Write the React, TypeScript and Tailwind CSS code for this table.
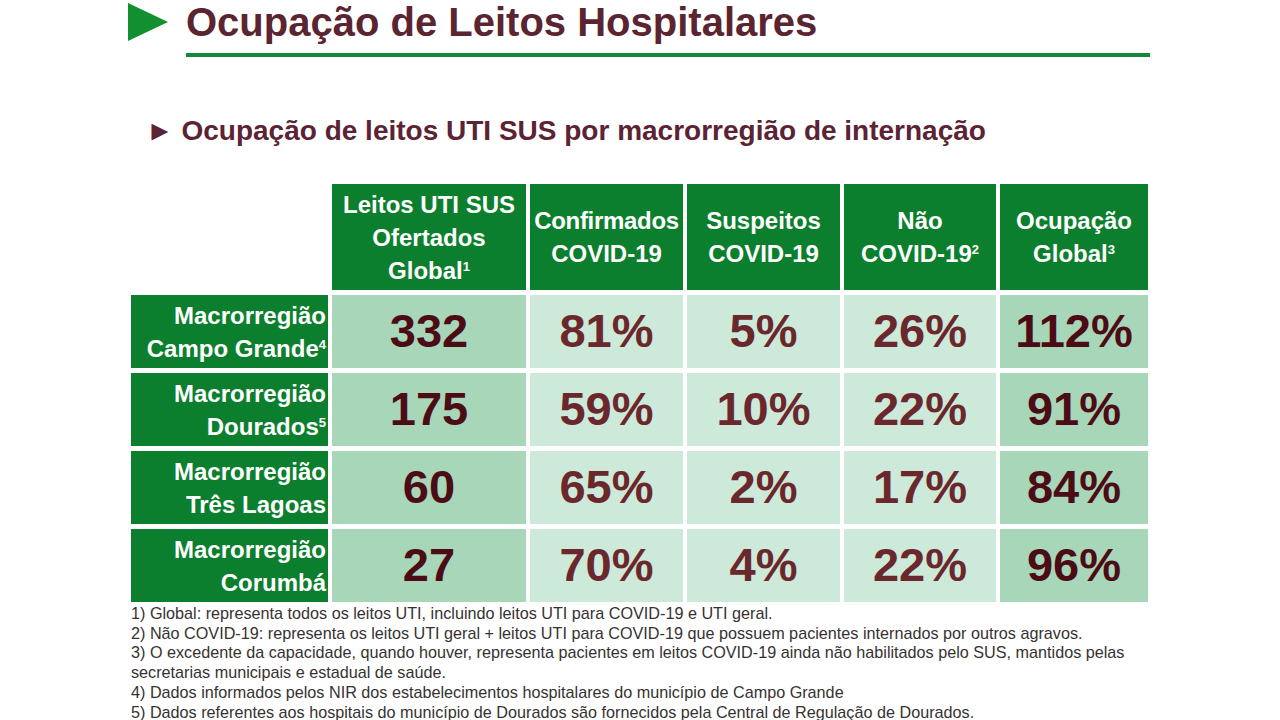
import React from "react"

const rows = [
  { top: "Macrorregião", bottom: "Campo Grande", sup: "4", vals: ["332", "81%", "5%", "26%", "112%"] },
  { top: "Macrorregião", bottom: "Dourados", sup: "5", vals: ["175", "59%", "10%", "22%", "91%"] },
  { top: "Macrorregião", bottom: "Três Lagoas", sup: "", vals: ["60", "65%", "2%", "17%", "84%"] },
  { top: "Macrorregião", bottom: "Corumbá", sup: "", vals: ["27", "70%", "4%", "22%", "96%"] },
]

// wrapped as in the slide
const notes = [
  "1) Global: representa todos os leitos UTI, incluindo leitos UTI para COVID-19 e UTI geral.",
  "2) Não COVID-19: representa os leitos UTI geral + leitos UTI para COVID-19 que possuem pacientes internados por outros agravos.",
  "3) O excedente da capacidade, quando houver, representa pacientes em leitos COVID-19 ainda não habilitados pelo SUS, mantidos pelas",
  "secretarias municipais e estadual de saúde.",
  "4) Dados informados pelos NIR dos estabelecimentos hospitalares do município de Campo Grande",
  "5) Dados referentes aos hospitais do município de Dourados são fornecidos pela Central de Regulação de Dourados.",
]

function Sup({ n }: { n: string }) {
  return <sup className="text-[13px] relative -top-[8px]">{n}</sup>
}

function HeadCell({ children }: { children: React.ReactNode }) {
  return (
    <div className="bg-[#0c7f2e] text-white font-bold text-[24px] leading-[33px] flex flex-col items-center justify-center text-center">
      {children}
    </div>
  )
}

export default function App() {
  return (
    <div className="w-[1280px] h-[720px] bg-white overflow-hidden font-['Liberation_Sans',Arial,sans-serif]">
      <div className="flex items-center h-[40px] mt-[2px] pl-[128px]">
        <svg width="40" height="38" viewBox="0 0 40 38">
          <polygon points="0,0 40,19 0,38" fill="#12902f" />
        </svg>
        <h1 className="ml-[18px] text-[40px] leading-[40px] font-bold text-[#5a2530]">Ocupação de Leitos Hospitalares</h1>
      </div>
      <div className="ml-[186px] mt-[11px] w-[964px] h-[4px] bg-[#16883a]" />

      <h2 className="ml-[146px] mt-[59px] text-[28px] leading-[30px] font-bold text-[#5b2333] whitespace-nowrap">
        ► Ocupação de leitos UTI SUS por macrorregião de internação
      </h2>

      <div className="ml-[131px] mt-[38px] grid grid-cols-[197px_194px_153px_153px_152px_148px] grid-rows-[106px_73px_73px_73px_73px] gap-x-[4px] gap-y-[5px]">
        <div />
        <HeadCell>
          <span>Leitos UTI SUS</span>
          <span>Ofertados</span>
          <span>Global<Sup n="1" /></span>
        </HeadCell>
        <HeadCell>
          <span className="tracking-[-0.3px]">Confirmados</span>
          <span>COVID-19</span>
        </HeadCell>
        <HeadCell>
          <span>Suspeitos</span>
          <span>COVID-19</span>
        </HeadCell>
        <HeadCell>
          <span>Não</span>
          <span>COVID-19<Sup n="2" /></span>
        </HeadCell>
        <HeadCell>
          <span>Ocupação</span>
          <span>Global<Sup n="3" /></span>
        </HeadCell>

        {rows.map((r) => (
          <React.Fragment key={r.bottom}>
            <div className="bg-[#0c7f2e] text-white font-bold text-[24px] leading-[33px] flex flex-col items-end justify-center pr-[2px] whitespace-nowrap">
              <span>{r.top}</span>
              <span>
                {r.bottom}
                {r.sup && <Sup n={r.sup} />}
              </span>
            </div>
            {r.vals.map((v, i) => {
              const dark = i === 0 || i === 4
              return (
                <div
                  key={i}
                  className={`flex items-center justify-center font-bold text-[47px] ${dark ? "bg-[#a8d6b9] text-[#4c0c16]" : "bg-[#cde9d9] text-[#6a282d]"}`}
                >
                  {v}
                </div>
              )
            })}
          </React.Fragment>
        ))}
      </div>

      <div className="ml-[131px] mt-[2px] text-[16.2px] leading-[19.7px] text-[#363232] whitespace-nowrap">
        {notes.map((n) => (
          <p key={n}>{n}</p>
        ))}
      </div>
    </div>
  )
}
